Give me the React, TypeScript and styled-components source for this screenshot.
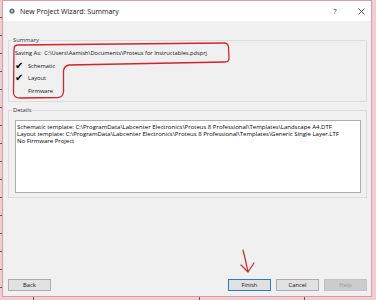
import React from "react";
import styled, { createGlobalStyle } from "styled-components";

const Global = createGlobalStyle`
  html, body { margin: 0; padding: 0; }
  body { width: 376px; height: 300px; overflow: hidden; background: #efcdd1; }
`;

const Page = styled.div`
  position: relative;
  width: 376px;
  height: 300px;
  box-sizing: border-box;
  padding: 0 4px 3px 2px;
  background-color: #efcdd1;
  background-image:
    repeating-linear-gradient(to bottom, transparent 0 17px, #6d5458 17px 18px),
    repeating-linear-gradient(to right, transparent 0 104px, #6d5458 104px 105px);
  background-size: 2px 100%, 100% 3px;
  background-position: 0 0, 95px 100%;
  background-repeat: no-repeat, repeat-x;
`;

const Window = styled.div`
  width: 370px;
  height: 297px;
  box-sizing: border-box;
  border: 1px solid #d99ba4;
  background: #f0f0f0;
  display: flex;
  flex-direction: column;
  font-family: "Open Sans", "Noto Sans", sans-serif;
  color: #111;
`;

const TitleBar = styled.div`
  height: 20px;
  flex: none;
  background: #ffffff;
  display: flex;
  align-items: center;
  padding-left: 6px;
`;

const TitleText = styled.span`
  margin-left: 5px;
  font-size: 7px;
  color: #111;
  flex: 1;
`;

const TitleButton = styled.span<{ $w: number; $mr?: number }>`
  width: ${(p) => p.$w}px;
  margin-right: ${(p) => p.$mr ?? 0}px;
  display: flex;
  justify-content: center;
  align-items: center;
  font-size: 7px;
  color: #222;
`;

const Content = styled.div`
  flex: 1;
  display: flex;
  flex-direction: column;
  padding: 15px 4px 5px 5px;
`;

const Group = styled.fieldset<{ $gap?: number }>`
  margin: ${(p) => p.$gap ?? 0}px 0 0 0;
  padding: 3px 5px 4px 6px;
  border: 1px solid #dcdcdc;
  min-width: 0;
`;

const Legend = styled.legend`
  padding: 0 1px;
  margin-left: -3px;
  font-size: 5.8px;
  line-height: 8px;
  color: #333;
`;

const Row = styled.div`
  display: flex;
  align-items: center;
  height: 12.5px;
  font-size: 5.7px;
  white-space: pre;
`;

const Check = styled.span`
  width: 13px;
  font-family: "DejaVu Sans", sans-serif;
  font-size: 10px;
  line-height: 10px;
  color: #000;
`;

const Indent = styled.span`
  width: 13px;
`;

const DetailsBox = styled.div`
  height: 73px;
  box-sizing: border-box;
  margin-top: 3px;
  background: #ffffff;
  border: 1px solid #adadad;
  padding: 3px 1px;
  font-size: 6px;
  line-height: 6.8px;
  color: #000;
  white-space: nowrap;
`;

const ButtonRow = styled.div`
  margin-top: auto;
  display: flex;
  gap: 5px;
`;

const Spacer = styled.div`
  flex: 1;
`;

const Button = styled.div<{ $variant?: "default" | "disabled" }>`
  width: 43px;
  height: 12px;
  box-sizing: border-box;
  display: flex;
  align-items: center;
  justify-content: center;
  font-size: 5.8px;
  background: ${(p) => (p.$variant === "disabled" ? "#cccccc" : "#e1e1e1")};
  border: 1px solid
    ${(p) =>
      p.$variant === "default" ? "#2b7bc4" : p.$variant === "disabled" ? "#c4c4c4" : "#adadad"};
  color: ${(p) => (p.$variant === "disabled" ? "#9a9a9a" : "#111")};
`;

const Overlay = styled.svg`
  position: absolute;
  left: 0;
  top: 0;
  pointer-events: none;
`;

export default function App() {
  return (
    <>
      <Global />
      <Page>
        <Window>
          <TitleBar>
            <svg width="6" height="6" viewBox="0 0 6 6">
              <circle cx="3" cy="3" r="2.6" fill="#5b6f86" />
              <circle cx="3" cy="3" r="1.1" fill="#c9d6e6" />
            </svg>
            <TitleText>New Project Wizard: Summary</TitleText>
            <TitleButton $w={12} $mr={10}>?</TitleButton>
            <TitleButton $w={20}>
              <svg width="7" height="7" viewBox="0 0 7 7">
                <path d="M0.5 0.5 L6.5 6.5 M6.5 0.5 L0.5 6.5" stroke="#333" strokeWidth="0.8" fill="none" />
              </svg>
            </TitleButton>
          </TitleBar>
          <Content>
            <Group>
              <Legend>Summary</Legend>
              <Row>Saving As:  C:\Users\Aamish\Documents\Proteus for Instructables.pdsprj</Row>
              <Row>
                <Check>✔</Check>Schematic
              </Row>
              <Row>
                <Check>✔</Check>Layout
              </Row>
              <Row>
                <Indent />Firmware
              </Row>
            </Group>
            <Group $gap={4}>
              <Legend>Details</Legend>
              <DetailsBox>
                <div>Schematic template: C:\ProgramData\Labcenter Electronics\Proteus 8 Professional\Templates\Landscape A4.DTF</div>
                <div>Layout template: C:\ProgramData\Labcenter Electronics\Proteus 8 Professional\Templates\Generic Single Layer.LTF</div>
                <div>No Firmware Project</div>
              </DetailsBox>
            </Group>
            <ButtonRow>
              <Button>Back</Button>
              <Spacer />
              <Button $variant="default">Finish</Button>
              <Button>Cancel</Button>
              <Button $variant="disabled">Help</Button>
            </ButtonRow>
          </Content>
        </Window>
        <Overlay width="376" height="300" viewBox="0 0 376 300">
          <path
            d="M14 49 Q14 45 18 45 L224 43 Q228 43 228.5 47 L229 58 Q229 62 225 62 L69 65 Q64 66 63.5 71 L63.5 92 Q63 97 58 97.5 L20 98 Q14 98 13.5 93 Z"
            fill="none"
            stroke="#d2232f"
            strokeWidth="1.3"
            strokeLinejoin="round"
          />
          <path
            d="M243 250 Q246 262 248 272 M241 265 L248 272 L254 263"
            fill="none"
            stroke="#d2232f"
            strokeWidth="1.2"
            strokeLinecap="round"
            strokeLinejoin="round"
          />
        </Overlay>
      </Page>
    </>
  );
}
